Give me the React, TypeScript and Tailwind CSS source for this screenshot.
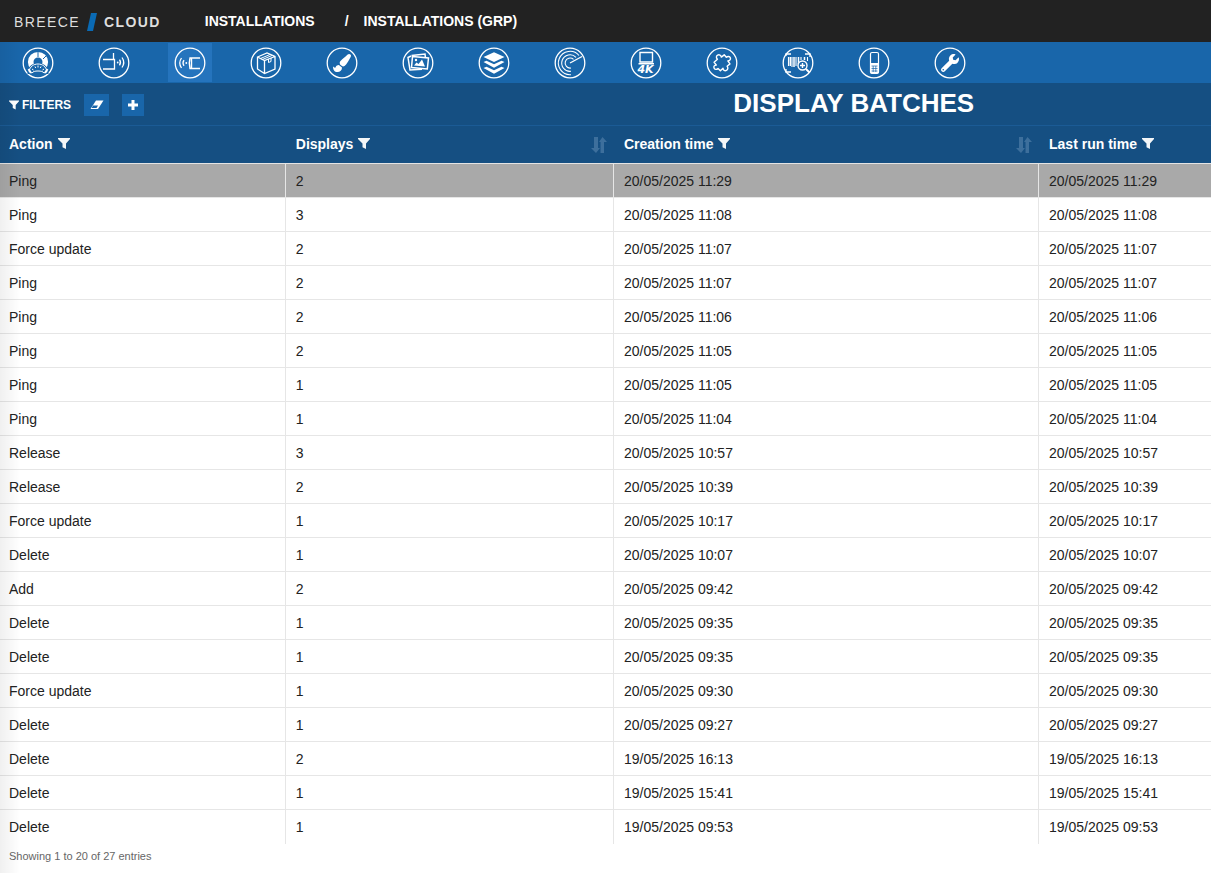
import React, { useState } from 'react';
import { FaPaintBrush, FaWrench } from 'react-icons/fa';

interface Batch {
  action: string;
  displays: number;
  created: string;
  lastRun: string;
}

const row = (action: string, displays: number, time: string): Batch => ({
  action,
  displays,
  created: time,
  lastRun: time,
});

const BATCHES: Batch[] = [
  row('Ping', 2, '20/05/2025 11:29'),
  row('Ping', 3, '20/05/2025 11:08'),
  row('Force update', 2, '20/05/2025 11:07'),
  row('Ping', 2, '20/05/2025 11:07'),
  row('Ping', 2, '20/05/2025 11:06'),
  row('Ping', 2, '20/05/2025 11:05'),
  row('Ping', 1, '20/05/2025 11:05'),
  row('Ping', 1, '20/05/2025 11:04'),
  row('Release', 3, '20/05/2025 10:57'),
  row('Release', 2, '20/05/2025 10:39'),
  row('Force update', 1, '20/05/2025 10:17'),
  row('Delete', 1, '20/05/2025 10:07'),
  row('Add', 2, '20/05/2025 09:42'),
  row('Delete', 1, '20/05/2025 09:35'),
  row('Delete', 1, '20/05/2025 09:35'),
  row('Force update', 1, '20/05/2025 09:30'),
  row('Delete', 1, '20/05/2025 09:27'),
  row('Delete', 2, '19/05/2025 16:13'),
  row('Delete', 1, '19/05/2025 15:41'),
  row('Delete', 1, '19/05/2025 09:53'),
];

// ---- Nav icons, all drawn inside a 32x32 ring ----
const NAV_ITEMS: { label: string; icon: React.ReactNode }[] = [
  {
    label: 'Dashboard',
    icon: (
      <>
        <circle cx="16" cy="15" r="7.3" strokeWidth="5.6" />
        <path d="M16 10V4M21 12l4-4" stroke="#1966aa" />
        <path d="M5.500 27c0-7 4-11 10.500-11s10.500 4 10.500 11z" fill="#1966aa" stroke="none" />
        <path d="M7 24.500c1-5 4.500-7.500 9-7.500s8 2.500 9 7.500l-3 1.500c-1-1.500-3-2-6-2s-5 .5-6 2z" />
        <path d="M10 22l1.500 1M13 19.500l.7 1.500M16 18.500v2M19 19.500l-.7 1.500M22 22l-1.500 1" />
        <path d="M6.500 22l2.500 4M25.500 22L23 26" strokeWidth="2" />
      </>
    ),
  },
  {
    label: 'Gateways',
    icon: (
      <>
        <path d="M5 12.500h11.500v9.500H5M15.500 6v6" strokeWidth="1.3" />
        <circle cx="19.700" cy="15.500" r=".9" fill="currentColor" stroke="none" />
        <path d="M21.500 12.700q2 2.800 0 5.600M24 10.500q3.500 5 0 10" strokeWidth="1.3" />
      </>
    ),
  },
  {
    label: 'Displays',
    icon: (
      <>
        <path d="M26 11H17.500v10.500H26M17.500 11H16q-1.500 5.200 0 10.500h1.500" strokeWidth="1.4" />
        <circle cx="12.300" cy="16" r=".9" fill="currentColor" stroke="none" />
        <path d="M10 13.200q-2 2.800 0 5.600M7.500 11q-3.500 5 0 10" strokeWidth="1.3" />
      </>
    ),
  },
  {
    label: 'Products',
    icon: (
      <>
        <path d="M7.500 10l9.500-4 8 3.500v12.500l-10.500 4.500-7-4.500zM7.500 10l7 3.500 10.500-4M14.500 13.500v13" strokeWidth="1.3" />
        <path d="M10.500 11.500L20 7.500M12.500 12.500l9.500-4M18.500 12v3.500l2.500-1V11" />
      </>
    ),
  },
  { label: 'Designs', icon: <FaPaintBrush x="7" y="7" size={18} stroke="none" /> },
  {
    label: 'Images',
    icon: (
      <>
        <path d="M10.500 9.500l16 1.500-1.200 11-15.800-1.500zM9.500 8.500L23 7l.4 3M9 9L6 10.500 8 23l12-.8" strokeWidth="1.5" />
        <path d="M12 18.500l2.500-3 2 1.500 3.500-4.500 3 7z" fill="currentColor" stroke="none" />
        <circle cx="14" cy="13" r="1.2" fill="currentColor" stroke="none" />
      </>
    ),
  },
  {
    label: 'Templates',
    icon: (
      <g fill="currentColor" stroke="none">
        <path d="M16 5.200l10.500 4.800L16 15 5.500 10z" />
        <path d="M5.500 15l3-1.300L16 17.300l7.500-3.600 3 1.300L16 20.800z" />
        <path d="M5.500 21l3-1.300L16 23.300l7.500-3.600 3 1.300L16 26.800z" />
      </g>
    ),
  },
  {
    label: 'Radar',
    icon: (
      <>
        <path d="M16 16l12-6.500" strokeWidth="1.4" />
        <path d="M25 8.500A11.700 11.700 0 1 0 17 27.700M22 10.300A8.300 8.300 0 1 0 17 24.300M19.500 12.400A5 5 0 1 0 17 21" strokeWidth="1.1" />
      </>
    ),
  },
  {
    label: '4K players',
    icon: (
      <>
        <path d="M10 5.500h12.500v9.500H10zM8.500 16.700h15.500" strokeWidth="1.4" />
        <text
          x="15.500"
          y="26"
          textAnchor="middle"
          fill="currentColor"
          stroke="none"
          className="font-['DejaVu_Sans',sans-serif] font-bold italic text-[11px]"
        >
          4K
        </text>
      </>
    ),
  },
  {
    label: 'Plugins',
    icon: (
      <g transform="translate(1.6 1.6) scale(.88)">
        <path
          d="M13 10.500c-1-2 0-4 2-4.200s3.500 1.500 3 3.700l4-1.200 1.200 3.500c2-.8 4 .3 4 2.200s-1.800 3-4 2.300l1 4-4 1.200c.6 2.200-.5 4-2.500 4.200s-3.500-1.500-2.700-3.700l-3.800 1.500-1.500-3.500c-2.200 1-4-.2-4-2.200s1.800-2.800 3.700-2l-1.200-4z"
          strokeWidth="1.6"
          strokeLinejoin="round"
          transform="rotate(-22 16 16)"
        />
      </g>
    ),
  },
  {
    label: 'Barcodes',
    icon: (
      <>
        <path d="M4 9V7h5M23 7h5v3M4 22v3h5" strokeWidth="1.3" />
        <path d="M6.500 10v9M10 10v10M14 10v9M19 10v3M25.500 10v4" strokeWidth="1.1" />
        <path d="M8.300 10v9M12 10v10M16.500 10v7M22.500 10v3" strokeWidth="1.500" />
        <circle cx="20.500" cy="18.500" r="4.5" fill="#1966aa" strokeWidth="1.4" />
        <path d="M18 18.500h5M20.500 16v5" strokeWidth="1.4" />
        <path d="M24 22l3.500 3.500" strokeWidth="2" />
      </>
    ),
  },
  {
    label: 'Handhelds',
    icon: (
      <>
        <rect x="12.500" y="5.500" width="8" height="21" rx="1.5" strokeWidth="1.2" />
        <path d="M12.500 16h8v9.500l-1 1h-6l-1-1z" fill="currentColor" stroke="none" />
        <path d="M13.500 19h6M13.500 21.500h6M13.500 24h6M15.200 19v6M17.800 19v6" stroke="#1966aa" strokeWidth=".7" />
      </>
    ),
  },
  { label: 'Settings', icon: <FaWrench x="7" y="7" size={18} stroke="none" /> },
];

function FunnelIcon({ className }: { className: string }) {
  return (
    <svg viewBox="0 0 12 11" className={className} fill="currentColor" aria-hidden="true">
      <path d="M0 0h12v1L8 5.600V11L4.500 9.200V5.600L0 1z" />
    </svg>
  );
}

function SortIcon() {
  return (
    <svg viewBox="0 0 16 16" className="size-4" fill="currentColor" aria-hidden="true">
      <path d="M3 0h4v11h2l-4 5-5-5h3zM9.500 16h3.500V5h3l-4.500-5L8 5h1.500z" />
    </svg>
  );
}

function ColumnHeader({ title, className, sortable }: { title: string; className: string; sortable?: boolean }) {
  return (
    <th scope="col" className={`${className} h-[39px] border-t border-t-[#1b5b95] border-b border-b-[#e4e4e4] pr-[7px] text-left`}>
      <div className="flex items-center justify-between">
        <span className="flex items-center gap-[5px] pb-[2px] whitespace-nowrap">
          {title}
          <button type="button" aria-label={`Filter ${title}`}>
            <FunnelIcon className="h-[11px] w-3 opacity-95" />
          </button>
        </span>
        {sortable && (
          <button type="button" aria-label={`Sort ${title}`} className="text-[#3d6f9c]">
            <SortIcon />
          </button>
        )}
      </div>
    </th>
  );
}

export default function App() {
  const [active, setActive] = useState('Displays');
  const [selected, setSelected] = useState(0);

  return (
    <div className="relative min-h-screen bg-white font-['Liberation_Sans',Arial,sans-serif] text-sm text-[#222]">
      {/* Brand + breadcrumb */}
      <header className="flex h-[42px] items-center bg-[#222] pl-[14px] text-white">
        <a href="#" className="flex items-center pt-px text-[#dedede] tracking-widest">
          BREECE
          <svg viewBox="0 0 10 18" className="mx-[7px] h-[18px] w-[10px]" aria-hidden="true">
            <path d="M4 0h6L6 18H0z" fill="#0a6ab4" />
          </svg>
          <span className="font-bold">CLOUD</span>
        </a>
        <nav aria-label="Breadcrumb" className="flex items-center pl-11 font-bold">
          <a href="#">INSTALLATIONS</a>
          <span className="pl-[30px] pr-[15px]">/</span>
          <a href="#">INSTALLATIONS (GRP)</a>
        </nav>
      </header>

      {/* Icon toolbar */}
      <nav className="flex h-[41px] gap-8 bg-[#1966aa] px-4 py-px text-white">
        {NAV_ITEMS.map(item => (
          <button
            key={item.label}
            type="button"
            aria-label={item.label}
            onClick={() => setActive(item.label)}
            className={`flex w-11 shrink-0 items-center justify-center ${item.label === active ? 'bg-[#2574bd]' : ''}`}
          >
            <svg viewBox="0 0 32 32" className="size-8" fill="none" stroke="currentColor" strokeWidth="1">
              <circle cx="16" cy="16" r="14.8" strokeWidth="1.3" />
              {item.icon}
            </svg>
          </button>
        ))}
      </nav>

      {/* Filters + title */}
      <div className="flex h-[42px] items-center bg-[#154f82] text-white">
        <div className="flex w-[41%] items-center pt-[2px] pl-[9px]">
          <FunnelIcon className="mr-[3px] size-[10px]" />
          <span className="text-xs font-bold">FILTERS</span>
          <button type="button" aria-label="Clear filters" className="ml-[13px] flex h-[22px] w-[25px] items-center justify-center bg-[#1966aa]">
            <svg viewBox="0 0 14 10" className="h-[10px] w-[14px]" aria-hidden="true">
              <path d="M6 .5h7.500l-5.500 8.500H.5z" fill="currentColor" />
              <path d="M3 5.500h5L6.500 8H1.700z" fill="#1966aa" />
            </svg>
          </button>
          <button type="button" aria-label="Add filter" className="ml-[13px] flex size-[22px] items-center justify-center bg-[#1966aa]">
            <svg viewBox="0 0 10 10" className="size-[10px]" aria-hidden="true">
              <path d="M5 0v10M0 5h10" stroke="currentColor" strokeWidth="3" />
            </svg>
          </button>
        </div>
        <h1 className="flex-1 pb-[3px] text-center text-[26px] leading-8 font-bold">DISPLAY BATCHES</h1>
      </div>

      <table className="w-full table-fixed border-separate border-spacing-0">
        <thead className="bg-[#154f82] text-white">
          <tr>
            <ColumnHeader title="Action" className="w-[23.6%] pl-[9px]" />
            <ColumnHeader title="Displays" className="w-[27.1%] pl-[10px]" sortable />
            <ColumnHeader title="Creation time" className="w-[35.1%] pl-[10px]" sortable />
            <ColumnHeader title="Last run time" className="w-[14.2%] pl-[10px]" />
          </tr>
        </thead>
        <tbody className="[&_td]:h-[34px] [&_td]:border-r [&_td]:border-b [&_td]:border-[#e6e6e6] [&_td]:pl-[10px] [&_td:first-child]:pl-[9px] [&_td:last-child]:border-r-0 [&_tr:last-child_td]:border-b-0">
          {BATCHES.map((batch, i) => (
            <tr key={i} onClick={() => setSelected(i)} className={i === selected ? 'bg-[#a9a9a9]' : ''}>
              <td>{batch.action}</td>
              <td>{batch.displays}</td>
              <td>{batch.created}</td>
              <td>{batch.lastRun}</td>
            </tr>
          ))}
        </tbody>
      </table>

      <p className="px-[9px] pt-1 text-[11px] leading-4 text-[#666]">Showing 1 to 20 of 27 entries</p>

      {/* Soft shadow along the left edge */}
      <div className="pointer-events-none absolute top-[42px] bottom-0 left-0 w-5 bg-linear-to-r from-black/6 to-transparent" />
    </div>
  );
}
